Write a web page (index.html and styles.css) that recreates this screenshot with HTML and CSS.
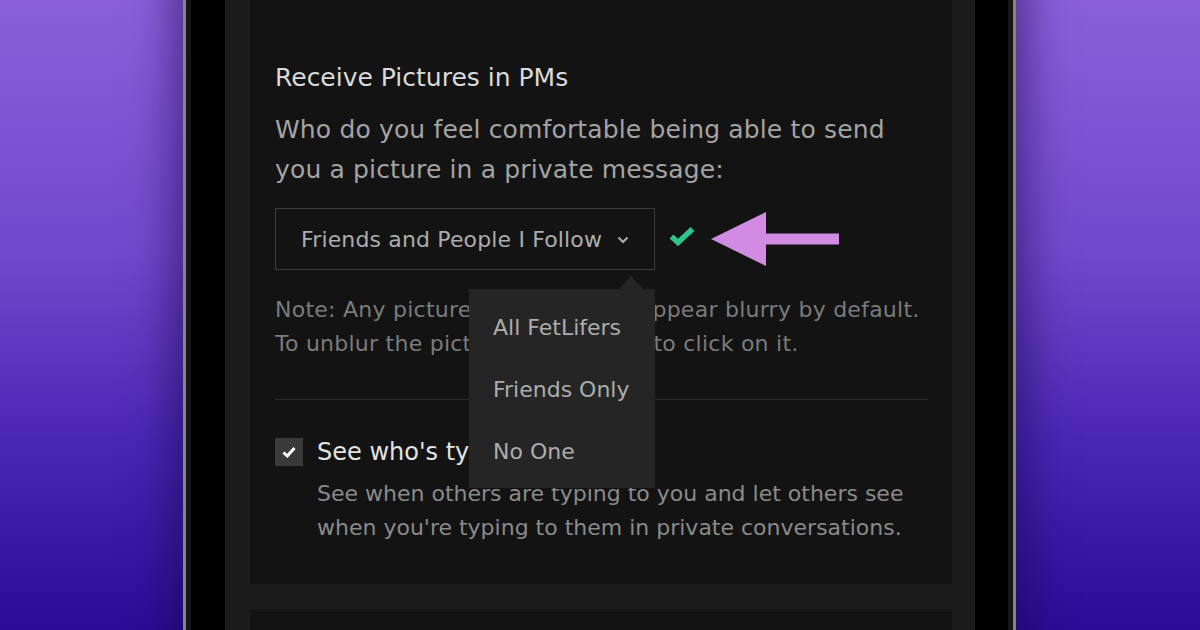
FILE: index.html
```html
<!DOCTYPE html>
<html lang="en">
<head>
<meta charset="utf-8">
<title>Receive Pictures in PMs</title>
<link rel="stylesheet" href="styles.css">
</head>
<body>
<div class="stage">
  <div class="phone">
    <div class="bezel">
      <div class="panel">
        <section class="card">
          <h2 class="title">Receive Pictures in PMs</h2>
          <p class="question">Who do you feel comfortable being able to send<br>you a picture in a private message:</p>
          <div class="select-row">
            <div class="select-wrap">
              <div class="select">
                <span>Friends and People I Follow</span>
                <svg class="chev" width="12" height="8" viewBox="0 0 12 8"><path d="M1.5 1.5 L6 6 L10.5 1.5" fill="none" stroke="#a9a9a9" stroke-width="2.2"/></svg>
              </div>
              <div class="menu">
                <div class="menu-item">All FetLifers</div>
                <div class="menu-item">Friends Only</div>
                <div class="menu-item">No One</div>
              </div>
            </div>
            <svg class="ok" width="26" height="20" viewBox="0 0 26 20"><path d="M2.5 10.5 L9 16.5 L23.5 3" fill="none" stroke="#2fc48c" stroke-width="5.5"/></svg>
            <svg class="arrow" width="130" height="56" viewBox="0 0 130 56"><polygon points="0,28 55,1 55,22.5 128,22.5 128,33.5 55,33.5 55,55" fill="#d18be2"/></svg>
          </div>
          <p class="note">Note: Any pictures received will appear blurry by default.<br>To unblur the picture, you'll need to click on it.</p>
          <hr class="divider">
          <div class="typing">
            <div class="checkbox"><svg width="14" height="12" viewBox="0 0 14 12"><path d="M1.5 6.5 L5.3 10 L12.5 2" fill="none" stroke="#ffffff" stroke-width="3"/></svg></div>
            <div class="typing-text">
              <div class="typing-title">See who's typing</div>
              <p class="typing-desc">See when others are typing to you and let others see<br>when you're typing to them in private conversations.</p>
            </div>
          </div>
        </section>
        <section class="card next"></section>
      </div>
    </div>
  </div>
</div>
</body>
</html>
```

FILE: styles.css
```css
* { box-sizing: border-box; }
html, body { margin: 0; padding: 0; }
body {
  width: 1200px;
  height: 630px;
  overflow: hidden;
  font-family: "DejaVu Sans", "Liberation Sans", sans-serif;
  background: linear-gradient(180deg, #8b5fdb 0%, #7049cc 40%, #4a26b4 70%, #2c0b96 100%);
}
.stage {
  display: flex;
  justify-content: flex-start;
  padding-left: 183px;
  height: 630px;
  overflow: hidden;
}
.phone {
  width: 833px;
  height: 700px;
  margin-top: -30px;
  border: 3px solid #86857f;
  border-top: none;
  background: #000;
  box-shadow: 0 0 40px 10px rgba(25, 5, 70, 0.55);
}
.bezel {
  height: 100%;
  border: 5px solid #161616;
  border-top: none;
  padding: 0 33px 0 34px;
  background: #000;
}
.panel {
  height: 100%;
  background: #1c1c1c;
  padding: 0 23px 0 25px;
  display: flex;
  flex-direction: column;
  gap: 25px;
}
.card {
  background: #131313;
  padding: 93px 24px 39px 25px;
}
.card.next { flex: 1; padding: 0; }
.title {
  margin: 0;
  font-weight: normal;
  font-size: 25px;
  line-height: 30px;
  color: #dadada;
}
.question {
  margin: 17px 0 0;
  font-size: 25px;
  letter-spacing: 0.15px;
  line-height: 40px;
  color: #a3a3a3;
}
.select-row {
  margin-top: 18px;
  display: flex;
  align-items: center;
}
.select-wrap { position: relative; }
.select {
  width: 380px;
  height: 62px;
  border: 1px solid #3b3b3b;
  display: flex;
  align-items: center;
  padding-left: 25px;
  gap: 15px;
  font-size: 22px;
  letter-spacing: 0.15px;
  color: #acacac;
}
.chev { margin-top: 2px; }
.ok { margin-left: 14px; margin-top: -6px; }
.arrow { margin-left: 16px; }
.menu {
  position: absolute;
  left: 194px;
  top: 81px;
  width: 186px;
  padding: 7px 0 6px;
  background: #252525;
  z-index: 2;
}
.menu::before {
  content: "";
  position: absolute;
  left: 150px;
  top: -13px;
  border-left: 12px solid transparent;
  border-right: 12px solid transparent;
  border-bottom: 13px solid #252525;
}
.menu-item {
  height: 62px;
  display: flex;
  align-items: center;
  padding-left: 24px;
  font-size: 22px;
  color: #acacac;
}
.note {
  margin: 23px 0 0;
  font-size: 22px;
  letter-spacing: 0.25px;
  line-height: 34px;
  color: #7b7b7b;
}
.divider {
  margin: 38px 0 0;
  border: none;
  border-top: 1px solid #2b2b2b;
}
.typing {
  margin-top: 37px;
  display: flex;
  gap: 14px;
}
.checkbox {
  flex: none;
  width: 28px;
  height: 28px;
  background: #3a3a3a;
  display: flex;
  align-items: center;
  justify-content: center;
  margin-top: 1px;
}
.typing-title {
  font-size: 24px;
  line-height: 30px;
  color: #e2e2e2;
}
.typing-desc {
  margin: 10px 0 0;
  font-size: 22px;
  line-height: 34px;
  color: #8a8a8a;
}
```
